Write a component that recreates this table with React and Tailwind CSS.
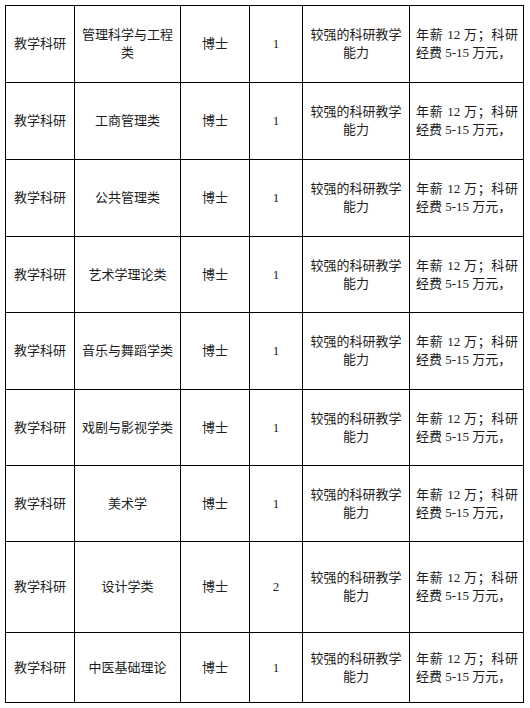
const rows = [
  { major: "管理科学与工程类", num: "1", h: "h-[77px]" },
  { major: "工商管理类", num: "1", h: "h-[77px]" },
  { major: "公共管理类", num: "1", h: "h-[77px]" },
  { major: "艺术学理论类", num: "1", h: "h-[76px]" },
  { major: "音乐与舞蹈学类", num: "1", h: "h-[77px]" },
  { major: "戏剧与影视学类", num: "1", h: "h-[76px]" },
  { major: "美术学", num: "1", h: "h-[76px]" },
  { major: "设计学类", num: "2", h: "h-[91px]" },
  { major: "中医基础理论", num: "1", h: "h-[70px]" },
];

function Cell({ children, className = "" }) {
  return (
    <div className={`flex items-center border-r border-b border-black ${className}`}>
      {children}
    </div>
  );
}

export default function App() {
  return (
    <div
      className="bg-white w-[530px] h-[708px] pt-[5px] pl-[5px] text-[13px] leading-[18px] text-[#1c1c1c]"
      style={{ fontFamily: '"Liberation Serif", "Noto Sans CJK SC", serif' }}
    >
      <div className="grid grid-cols-[69px_106px_69px_53px_107px_114px] w-fit border-l border-t border-black">
        {rows.map((r, i) => (
          <div key={i} className={`contents`}>
            <Cell className={`${r.h} justify-center`}>教学科研</Cell>
            <Cell className={`${r.h} justify-center text-center px-[6px]`}>{r.major}</Cell>
            <Cell className={`${r.h} justify-center`}>博士</Cell>
            <Cell className={`${r.h} justify-center`}>{r.num}</Cell>
            <Cell className={`${r.h} justify-center text-center px-[6px]`}>较强的科研教学能力</Cell>
            <Cell className={`${r.h} pl-[6px] pr-[5px]`}>
              <p className="text-justify w-full">年薪 12 万；科研经费 5-15 万元，</p>
            </Cell>
          </div>
        ))}
      </div>
    </div>
  );
}
